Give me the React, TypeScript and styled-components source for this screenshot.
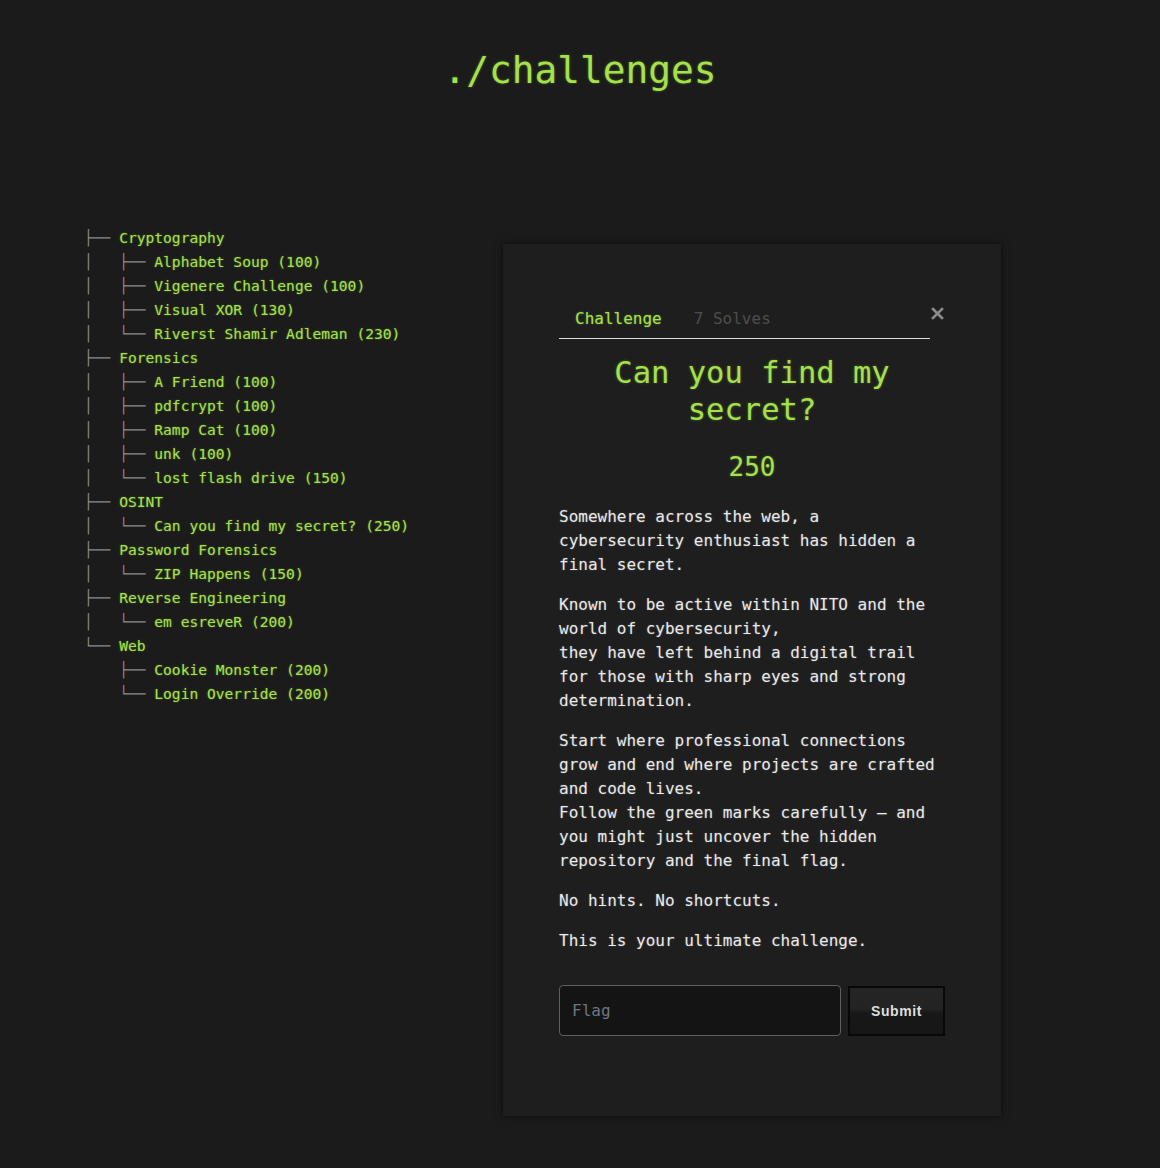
import React from "react";
import styled, { createGlobalStyle } from "styled-components";

const GREEN = "#a4e14b";

const GlobalStyle = createGlobalStyle`
  html, body {
    margin: 0;
    padding: 0;
    background: #1b1b1b;
    font-family: "DejaVu Sans Mono", "Liberation Mono", monospace;
  }
  * { box-sizing: border-box; }
`;

const Page = styled.div`
  min-height: 1168px;
  background: #1b1b1b;
`;

const Heading = styled.h1`
  margin: 0;
  padding-top: 48px;
  text-align: center;
  font-size: 37.8px;
  line-height: 44px;
  font-weight: normal;
  color: ${GREEN};
  text-shadow: 0 0 3px rgba(164, 225, 75, 0.35);
`;

const Main = styled.main`
  display: flex;
  align-items: flex-start;
  padding-left: 84px;
  margin-top: 134px;
`;

const Tree = styled.div`
  width: 419px;
  flex-shrink: 0;
  font-size: 14.6px;
  line-height: 24px;
`;

const Row = styled.div`
  display: flex;
  white-space: pre;
  height: 24px;
`;

const Branch = styled.span`
  color: #8a8a8a;
`;

const Label = styled.span`
  color: ${GREEN};
  text-shadow: 0 0 2px rgba(164, 225, 75, 0.45);
`;

const Card = styled.section`
  width: 498px;
  margin-top: 18px;
  padding: 63px 56px 80px;
  background: #1e1e1e;
  box-shadow: 0 0 8px rgba(0, 0, 0, 0.55);
`;

const HeaderRow = styled.div`
  display: flex;
  align-items: flex-start;
`;

const Tabs = styled.nav`
  flex: 1;
  display: flex;
  border-bottom: 1px solid #dcdcdc;
  padding-bottom: 7px;
`;

const Tab = styled.span<{ $active?: boolean }>`
  padding: 0 16px;
  font-size: 16px;
  line-height: 24px;
  color: ${(p) => (p.$active ? GREEN : "#4e4e4e")};
  text-shadow: ${(p) =>
    p.$active ? "0 0 2px rgba(164, 225, 75, 0.45)" : "none"};
`;

const Close = styled.button`
  width: 15px;
  height: 15px;
  margin-top: -1px;
  padding: 0;
  border: none;
  background: transparent;
  display: flex;
  align-items: center;
  justify-content: center;
  cursor: pointer;
`;

const Title = styled.h2`
  margin: 15px 0 0;
  text-align: center;
  font-size: 30.5px;
  line-height: 37px;
  font-weight: normal;
  color: ${GREEN};
  text-shadow: 0 0 3px rgba(164, 225, 75, 0.35);
`;

const Points = styled.h3`
  margin: 23px 0 0;
  text-align: center;
  font-size: 26px;
  line-height: 32px;
  font-weight: normal;
  color: ${GREEN};
  text-shadow: 0 0 3px rgba(164, 225, 75, 0.35);
`;

const Description = styled.div`
  margin-top: 22px;
  font-size: 16px;
  line-height: 24px;
  color: #e9e9e9;
  text-shadow: 0 0 2px rgba(255, 255, 255, 0.25);

  p {
    margin: 0 0 16px;
  }
  p:last-child {
    margin-bottom: 0;
  }
`;

const Form = styled.form`
  display: flex;
  gap: 7px;
  margin-top: 32px;
`;

const FlagInput = styled.input`
  width: 282px;
  height: 51px;
  padding: 0 12px;
  background: #141414;
  border: 1px solid #5f5f5f;
  border-radius: 4px;
  color: #e9e9e9;
  font-family: "DejaVu Sans Mono", "Liberation Mono", monospace;
  font-size: 16px;
  outline: none;

  &::placeholder {
    color: #6d7680;
  }
`;

const SubmitButton = styled.button`
  width: 97px;
  height: 50px;
  margin-top: 1px;
  border: 2px solid #080808;
  background: linear-gradient(#252525 0%, #232323 46%, #181818 54%, #161616 100%);
  color: #dedede;
  font-family: "Liberation Sans", Arial, sans-serif;
  font-weight: bold;
  font-size: 14px;
  letter-spacing: 0.6px;
  cursor: pointer;
`;

type Item = { prefix: string; label: string };

const tree: Item[] = [
  { prefix: "├── ", label: "Cryptography" },
  { prefix: "│   ├── ", label: "Alphabet Soup (100)" },
  { prefix: "│   ├── ", label: "Vigenere Challenge (100)" },
  { prefix: "│   ├── ", label: "Visual XOR (130)" },
  { prefix: "│   └── ", label: "Riverst Shamir Adleman (230)" },
  { prefix: "├── ", label: "Forensics" },
  { prefix: "│   ├── ", label: "A Friend (100)" },
  { prefix: "│   ├── ", label: "pdfcrypt (100)" },
  { prefix: "│   ├── ", label: "Ramp Cat (100)" },
  { prefix: "│   ├── ", label: "unk (100)" },
  { prefix: "│   └── ", label: "lost flash drive (150)" },
  { prefix: "├── ", label: "OSINT" },
  { prefix: "│   └── ", label: "Can you find my secret? (250)" },
  { prefix: "├── ", label: "Password Forensics" },
  { prefix: "│   └── ", label: "ZIP Happens (150)" },
  { prefix: "├── ", label: "Reverse Engineering" },
  { prefix: "│   └── ", label: "em esreveR (200)" },
  { prefix: "└── ", label: "Web" },
  { prefix: "    ├── ", label: "Cookie Monster (200)" },
  { prefix: "    └── ", label: "Login Override (200)" },
];

export default function App() {
  return (
    <>
      <GlobalStyle />
      <Page>
        <Heading>./challenges</Heading>
        <Main>
          <Tree>
            {tree.map((item, i) => (
              <Row key={i}>
                <Branch>{item.prefix}</Branch>
                <Label>{item.label}</Label>
              </Row>
            ))}
          </Tree>
          <Card>
            <HeaderRow>
              <Tabs>
                <Tab $active>Challenge</Tab>
                <Tab>7 Solves</Tab>
              </Tabs>
              <Close aria-label="Close">
                <svg width="13" height="13" viewBox="0 0 13 13">
                  <path
                    d="M2 2 L11 11 M11 2 L2 11"
                    stroke="#8c8c8c"
                    strokeWidth="2.6"
                    strokeLinecap="square"
                  />
                </svg>
              </Close>
            </HeaderRow>
            <Title>Can you find my secret?</Title>
            <Points>250</Points>
            <Description>
              <p>
                Somewhere across the web, a cybersecurity enthusiast has hidden
                a final secret.
              </p>
              <p>
                Known to be active within NITO and the world of cybersecurity,
                <br />
                they have left behind a digital trail for those with sharp eyes
                and strong determination.
              </p>
              <p>
                Start where professional connections grow and end where projects
                are crafted and code lives.
                <br />
                Follow the green marks carefully — and you might just uncover
                the hidden repository and the final flag.
              </p>
              <p>No hints. No shortcuts.</p>
              <p>This is your ultimate challenge.</p>
            </Description>
            <Form onSubmit={(e) => e.preventDefault()}>
              <FlagInput placeholder="Flag" />
              <SubmitButton type="submit">Submit</SubmitButton>
            </Form>
          </Card>
        </Main>
      </Page>
    </>
  );
}
